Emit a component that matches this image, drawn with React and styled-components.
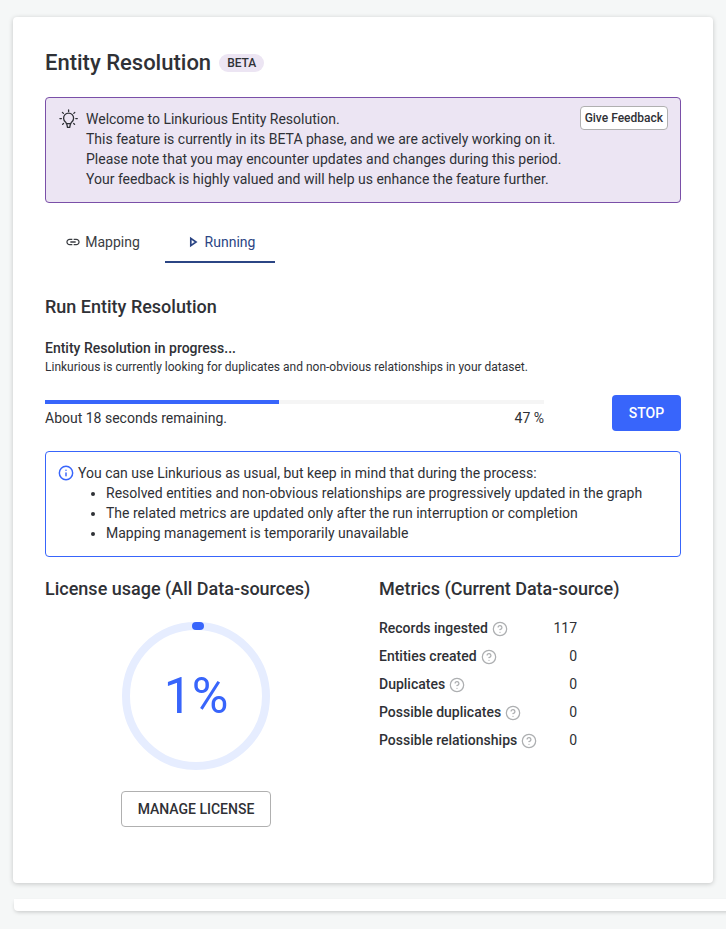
import React from "react";
import styled, { createGlobalStyle } from "styled-components";
import { Info, CircleHelp } from "lucide-react";

const metrics = [
  { label: "Records ingested", value: 117 },
  { label: "Entities created", value: 0 },
  { label: "Duplicates", value: 0 },
  { label: "Possible duplicates", value: 0 },
  { label: "Possible relationships", value: 0 },
];

const notes = [
  "Resolved entities and non-obvious relationships are progressively updated in the graph",
  "The related metrics are updated only after the run interruption or completion",
  "Mapping management is temporarily unavailable",
];

const BulbIcon = () => (
  <svg width="20" height="20" viewBox="0 0 20 20" fill="none" stroke="#2f3136" strokeWidth="1.3" strokeLinecap="round">
    <path d="M6.4 12.9a5 5 0 1 1 6.4 0c-.6.6-.9 1.1-1 1.8H7.4c-.1-.7-.4-1.2-1-1.8z" />
    <path d="M7.8 15l.7 3.4h2.2l.7-3.4" />
    <path d="M9.6 1v1.4M3.4 3.4l1 1M15.8 3.4l-1 1M.9 9.6h1.5M16.8 9.6h1.5M3.6 15.4l.9-.9M15.6 15.4l-.9-.9" />
  </svg>
);

const LinkIcon = () => (
  <svg width="16" height="16" viewBox="0 0 24 24" fill="#3a3d42">
    <path d="M3.9 12c0-1.71 1.39-3.1 3.1-3.1h4V7H7c-2.76 0-5 2.24-5 5s2.24 5 5 5h4v-1.9H7c-1.71 0-3.1-1.39-3.1-3.1zM8 13h8v-2H8v2zm9-6h-4v1.9h4c1.71 0 3.1 1.39 3.1 3.1s-1.39 3.1-3.1 3.1h-4V17h4c2.76 0 5-2.24 5-5s-2.24-5-5-5z" />
  </svg>
);

const PlayIcon = () => (
  <svg width="16" height="16" viewBox="0 0 16 16" fill="none" stroke="#2b4584" strokeWidth="1.7">
    <path d="M5.8 4.4v7.2L11 8z" />
  </svg>
);

const Gauge = () => (
  <svg width="148" height="148" viewBox="0 0 148 148" fill="none">
    <circle cx="74" cy="74" r="70" stroke="#e6edff" strokeWidth="8" />
    <rect x="70" y="0" width="12" height="8" rx="4" fill="#3865fb" />
  </svg>
);

export default function App() {
  return (
    <Page>
      <GlobalStyle />
      <Card>
        <TitleRow>
          <Title>Entity Resolution</Title>
          <Badge>BETA</Badge>
        </TitleRow>

        <Banner>
          <BulbSlot>
            <BulbIcon />
          </BulbSlot>
          <BannerText>
            Welcome to Linkurious Entity Resolution.
            <br />
            This feature is currently in its BETA phase, and we are actively working on it.
            <br />
            Please note that you may encounter updates and changes during this period.
            <br />
            Your feedback is highly valued and will help us enhance the feature further.
          </BannerText>
          <FeedbackButton>Give Feedback</FeedbackButton>
        </Banner>

        <Tabs>
          <Tab $width={120} $gap={4} $endPad={5}>
            <LinkIcon />
            Mapping
          </Tab>
          <Tab $width={110} $gap={4} $endPad={0} $active>
            <PlayIcon />
            Running
          </Tab>
        </Tabs>

        <SectionTitle>Run Entity Resolution</SectionTitle>
        <ProgressTitle>Entity Resolution in progress...</ProgressTitle>
        <ProgressHint>
          Linkurious is currently looking for duplicates and non-obvious relationships in your dataset.
        </ProgressHint>

        <ProgressRow>
          <ProgressColumn>
            <Track>
              <Fill style={{ width: "46.8%" }} />
            </Track>
            <ProgressLabels>
              <span>About 18 seconds remaining.</span>
              <span>47 %</span>
            </ProgressLabels>
          </ProgressColumn>
          <StopButton>STOP</StopButton>
        </ProgressRow>

        <Notice>
          <NoticeLead>
            <Info size={16} color="#3865fb" strokeWidth={2.2} />
            You can use Linkurious as usual, but keep in mind that during the process:
          </NoticeLead>
          <NoticeList>
            {notes.map((note) => (
              <li key={note}>{note}</li>
            ))}
          </NoticeList>
        </Notice>

        <Columns>
          <LicenseColumn>
            <ColumnTitle>License usage (All Data-sources)</ColumnTitle>
            <GaugeBox>
              <Gauge />
              <GaugeValue>1%</GaugeValue>
            </GaugeBox>
            <ManageButton>MANAGE LICENSE</ManageButton>
          </LicenseColumn>
          <div>
            <ColumnTitle>Metrics (Current Data-source)</ColumnTitle>
            <MetricList>
              {metrics.map((metric) => (
                <MetricRow key={metric.label}>
                  <MetricLabel>
                    {metric.label}
                    <HelpIcon size={16} color="#adafb1" strokeWidth={1.9} />
                  </MetricLabel>
                  <MetricValue>{metric.value}</MetricValue>
                </MetricRow>
              ))}
            </MetricList>
          </div>
        </Columns>
      </Card>
      <NextCard />
    </Page>
  );
}

/*STYLES*/
const GlobalStyle = createGlobalStyle`
  html, body {
    margin: 0;
    background: #f5f7f7;
    font-family: Roboto, "Liberation Sans", sans-serif;
    color: #2f3136;
    overflow: hidden;
  }
`;
const Page = styled.div`
  height: 929px;
  padding: 17px 0 0 13px;
  box-sizing: border-box;
  overflow: hidden;
`;
const Card = styled.div`
  width: 700px;
  height: 866px;
  box-sizing: border-box;
  padding: 32px 32px 0;
  background: #fff;
  border-radius: 4px;
  box-shadow: 0 1px 5px rgba(0, 0, 0, 0.2);
`;
const TitleRow = styled.div`
  display: flex;
  align-items: center;
  gap: 8px;
  height: 28px;
`;
const Title = styled.h1`
  margin: 0;
  font-size: 22px;
  line-height: 28px;
  font-weight: 500;
`;
const Badge = styled.span`
  padding: 0 8px;
  height: 18px;
  line-height: 18px;
  font-size: 12px;
  font-weight: 500;
  background: #ece5f3;
  border-radius: 9px;
`;
const Banner = styled.div`
  display: flex;
  align-items: flex-start;
  margin-top: 20px;
  height: 106px;
  box-sizing: border-box;
  padding: 11px 12px 0 13px;
  background: #ece5f3;
  border: 1px solid #7a4fa8;
  border-radius: 4px;
  font-size: 14px;
  line-height: 20px;
`;
const BulbSlot = styled.div`
  width: 27px;
  height: 20px;
  flex: none;
`;
const BannerText = styled.div`
  flex: 1;
`;
const FeedbackButton = styled.button`
  height: 24px;
  margin-top: -3px;
  padding: 0 4px;
  font-family: inherit;
  font-size: 12px;
  font-weight: 500;
  color: #2f3136;
  background: #fff;
  border: 1px solid #b0b0b0;
  border-radius: 4px;
`;
const Tabs = styled.div`
  display: flex;
  margin-top: 20px;
`;
const Tab = styled.div`
  display: flex;
  align-items: center;
  justify-content: center;
  gap: ${(p) => p.$gap}px;
  width: ${(p) => p.$width}px;
  height: 40px;
  padding-right: ${(p) => p.$endPad}px;
  box-sizing: border-box;
  font-size: 14px;
  color: ${(p) => (p.$active ? "#2b4584" : "#3a3d42")};
  border-bottom: 2px solid ${(p) => (p.$active ? "#2b4584" : "transparent")};
`;
const SectionTitle = styled.h2`
  margin: 32px 0 0;
  font-size: 18px;
  line-height: 24px;
  font-weight: 500;
`;
const ProgressTitle = styled.div`
  margin-top: 19px;
  font-size: 14px;
  line-height: 20px;
  font-weight: 500;
`;
const ProgressHint = styled.div`
  font-size: 12px;
  line-height: 18px;
`;
const ProgressRow = styled.div`
  display: flex;
  justify-content: space-between;
  margin-top: 19px;
`;
const ProgressColumn = styled.div`
  width: 499px;
  padding-top: 5px;
`;
const Track = styled.div`
  height: 4px;
  background: #f5f5f5;
`;
const Fill = styled.div`
  height: 100%;
  background: #3865fb;
`;
const ProgressLabels = styled.div`
  display: flex;
  justify-content: space-between;
  margin-top: 4px;
  font-size: 14px;
  line-height: 20px;
`;
const StopButton = styled.button`
  width: 69px;
  height: 36px;
  font-family: inherit;
  font-size: 14px;
  font-weight: 500;
  color: #fff;
  background: #3865fb;
  border: none;
  border-radius: 4px;
`;
const Notice = styled.div`
  margin-top: 20px;
  height: 106px;
  box-sizing: border-box;
  padding: 11px 12px 0;
  border: 1px solid #3865fb;
  border-radius: 4px;
  font-size: 14px;
  line-height: 20px;
`;
const NoticeLead = styled.div`
  display: flex;
  align-items: center;
  gap: 4px;
`;
const NoticeList = styled.ul`
  margin: 0;
  padding-left: 48px;
`;
const Columns = styled.div`
  display: grid;
  grid-template-columns: 334px 1fr;
  margin-top: 20px;
`;
const LicenseColumn = styled.div`
  display: flex;
  flex-direction: column;
`;
const ColumnTitle = styled.h3`
  margin: 0;
  font-size: 18px;
  line-height: 24px;
  font-weight: 500;
`;
const GaugeBox = styled.div`
  position: relative;
  width: 148px;
  height: 148px;
  margin: 21px 0 0 77px;
`;
const GaugeValue = styled.div`
  position: absolute;
  inset: 0;
  display: flex;
  align-items: center;
  justify-content: center;
  font-size: 50px;
  line-height: 1;
  color: #3865fb;
`;
const ManageButton = styled.button`
  width: 150px;
  height: 36px;
  margin: 21px 0 0 76px;
  font-family: inherit;
  font-size: 14px;
  font-weight: 500;
  color: #2f3136;
  background: #fff;
  border: 1px solid #b0b0b0;
  border-radius: 4px;
`;
const MetricList = styled.div`
  margin-top: 13px;
  width: 198px;
`;
const MetricRow = styled.div`
  display: flex;
  justify-content: space-between;
  align-items: center;
  height: 28px;
  font-size: 14px;
`;
const MetricLabel = styled.span`
  display: flex;
  align-items: center;
  gap: 4px;
  font-weight: 500;
`;
const HelpIcon = styled(CircleHelp)`
  margin-top: 1px;
`;
const MetricValue = styled.span`
  font-weight: 400;
`;
const NextCard = styled.div`
  width: 760px;
  height: 12px;
  margin: 16px 0 0 1px;
  background: #fff;
  border-radius: 0 0 4px 4px;
  box-shadow: 0 2px 4px -1px rgba(0, 0, 0, 0.2);
`;
